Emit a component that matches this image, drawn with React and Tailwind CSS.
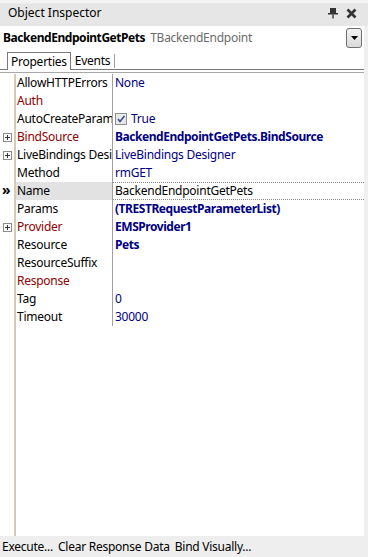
import React from "react";

const B = "font-bold tracking-[-0.45px]";

const rows = [
  { name: "AllowHTTPErrors", value: "None", nc: "text-black", vc: "text-[#000080]" },
  { name: "Auth", value: "", nc: "text-[#8b0000]" },
  { name: "AutoCreateParams", value: "True", nc: "text-black", vc: "text-[#000080]", check: true },
  { name: "BindSource", value: "BackendEndpointGetPets.BindSource", nc: "text-[#8b0000]", vc: "text-[#000080] " + B, expand: true },
  { name: "LiveBindings Designer", value: "LiveBindings Designer", nc: "text-black", vc: "text-[#000080]", expand: true },
  { name: "Method", value: "rmGET", nc: "text-black", vc: "text-[#000080]" },
  { name: "Name", value: "BackendEndpointGetPets", nc: "text-black", vc: "text-black", selected: true },
  { name: "Params", value: "(TRESTRequestParameterList)", nc: "text-black", vc: "text-[#000080] " + B },
  { name: "Provider", value: "EMSProvider1", nc: "text-[#8b0000]", vc: "text-[#000080] " + B, expand: true },
  { name: "Resource", value: "Pets", nc: "text-black", vc: "text-[#000080] " + B },
  { name: "ResourceSuffix", value: "", nc: "text-black" },
  { name: "Response", value: "", nc: "text-[#8b0000]" },
  { name: "Tag", value: "0", nc: "text-black", vc: "text-[#000080]" },
  { name: "Timeout", value: "30000", nc: "text-black", vc: "text-[#000080]" },
];

function ExpandBox() {
  return (
    <svg width="9" height="9" viewBox="0 0 9 9" className="block">
      <rect x="0.5" y="0.5" width="8" height="8" fill="#fff" stroke="#8c8c8c" />
      <path d="M2 4.5h5M4.5 2v5" stroke="#333" strokeWidth="1" />
    </svg>
  );
}

function Row({ r }) {
  return (
    <div className="flex h-[18px] items-center">
      <div className="w-[14px] h-full flex items-center justify-start pl-[3px]">
        {r.expand && <ExpandBox />}
        {r.selected && (
          <span className="text-[14px] font-bold leading-none text-black -ml-[1px] -mt-[2px]">»</span>
        )}
      </div>
      <div className="w-[2px] h-full bg-[#d6ccb4]" />
      <div
        className={
          "w-[96px] h-full flex items-center pl-[1px] overflow-hidden whitespace-nowrap " +
          (r.selected ? "bg-[#e2e2e2] " : "") +
          r.nc
        }
      >
        {r.name}
      </div>
      <div className="w-[1px] h-full bg-[#a0a0a0]" />
      <div
        className={
          "flex-1 h-full flex items-center pl-[2px] whitespace-nowrap overflow-hidden " +
          (r.selected ? "border-t border-b border-dotted border-[#8a8a8a] " : "") +
          (r.vc || "")
        }
      >
        {r.check && (
          <span className="w-[12px] h-[12px] mr-[4px] border border-[#8f8f8f] bg-[#e8e8e8] flex items-center justify-center">
            <svg width="10" height="10" viewBox="0 0 10 10">
              <path d="M2 5l2 2.5L8.5 2" stroke="#3c4f8a" strokeWidth="1.6" fill="none" />
            </svg>
          </span>
        )}
        {r.value}
      </div>
    </div>
  );
}

export default function App() {
  return (
    <div className="w-[368px] h-[557px] flex flex-col bg-[#f0f0f0] font-['Noto_Sans',sans-serif] text-[12px] tracking-[-0.25px] leading-none text-black overflow-hidden">
      {/* Title bar */}
      <div className="h-[26px] flex items-center bg-gradient-to-b from-[#f4f4f4] to-[#e6e6e6] from-[10%] to-[15%] px-[8px]">
        <span className="flex-1 tracking-normal">Object Inspector</span>
        <svg width="10" height="12" viewBox="0 0 10 12" className="mr-[8px]">
          <rect x="2" y="1" width="6" height="5" fill="#333" />
          <rect x="0" y="6" width="10" height="1.5" fill="#333" />
          <rect x="4.3" y="7.5" width="1.4" height="4" fill="#333" />
        </svg>
        <svg width="11" height="11" viewBox="0 0 11 11" className="mr-[3px]">
          <path d="M1.5 1.5l8 8M9.5 1.5l-8 8" stroke="#333" strokeWidth="2.6" />
        </svg>
      </div>

      <div className="flex-1 flex min-h-0">
        <div className="flex-1 flex flex-col bg-white min-w-0">
          {/* Selector row */}
          <div className="h-[24px] flex items-center pl-[3px] pr-[2px]">
            <span className={B}>BackendEndpointGetPets</span>
            <span className="ml-[5px] text-[#6b6b6b]">TBackendEndpoint</span>
            <div className="flex-1" />
            <div className="w-[16px] h-[20px] rounded-[3px] border border-[#707070] bg-gradient-to-b from-[#f3f3f3] to-[#dadada] flex items-center justify-center">
              <svg width="7" height="4" viewBox="0 0 7 4">
                <path d="M0 0h7L3.5 4z" fill="#000" />
              </svg>
            </div>
          </div>

          {/* Tabs */}
          <div className="h-[23px] flex flex-col">
            <div className="flex-1 flex items-end">
              <div className="w-[7px] h-full border-b border-[#7a7a7a]" />
              <div className="h-[18px] px-[3px] border-l border-t border-r border-[#7a7a7a] flex items-center bg-white">
                Properties
              </div>
              <div className="h-[18px] pl-[4px] pr-[4px] flex items-center border-b border-[#7a7a7a]">
                <span>Events</span>
                <span className="ml-[4px] w-[1px] h-[14px] bg-[#a0a0a0]" />
              </div>
              <div className="flex-1 h-full border-b border-[#7a7a7a]" />
            </div>
            <div className="h-[3px] border-b border-[#a8a8a8]" />
          </div>

          {/* Grid */}
          <div className="flex-1 flex flex-col pt-[1px] min-h-0">
            {rows.map((r) => (
              <Row key={r.name} r={r} />
            ))}
            <div className="flex flex-1">
              <div className="w-[14px]" />
              <div className="w-[2px] bg-[#d6ccb4]" />
              <div className="flex-1" />
            </div>
          </div>
        </div>
        <div className="w-[4px]" />
      </div>

      {/* Bottom bar */}
      <div className="h-[21px] flex items-center pl-[2px] bg-[#eeeeee] whitespace-nowrap">
        <span>Execute...</span>
        <span className="ml-[5px]">Clear Response Data</span>
        <span className="ml-[5px]">Bind Visually...</span>
      </div>
    </div>
  );
}
